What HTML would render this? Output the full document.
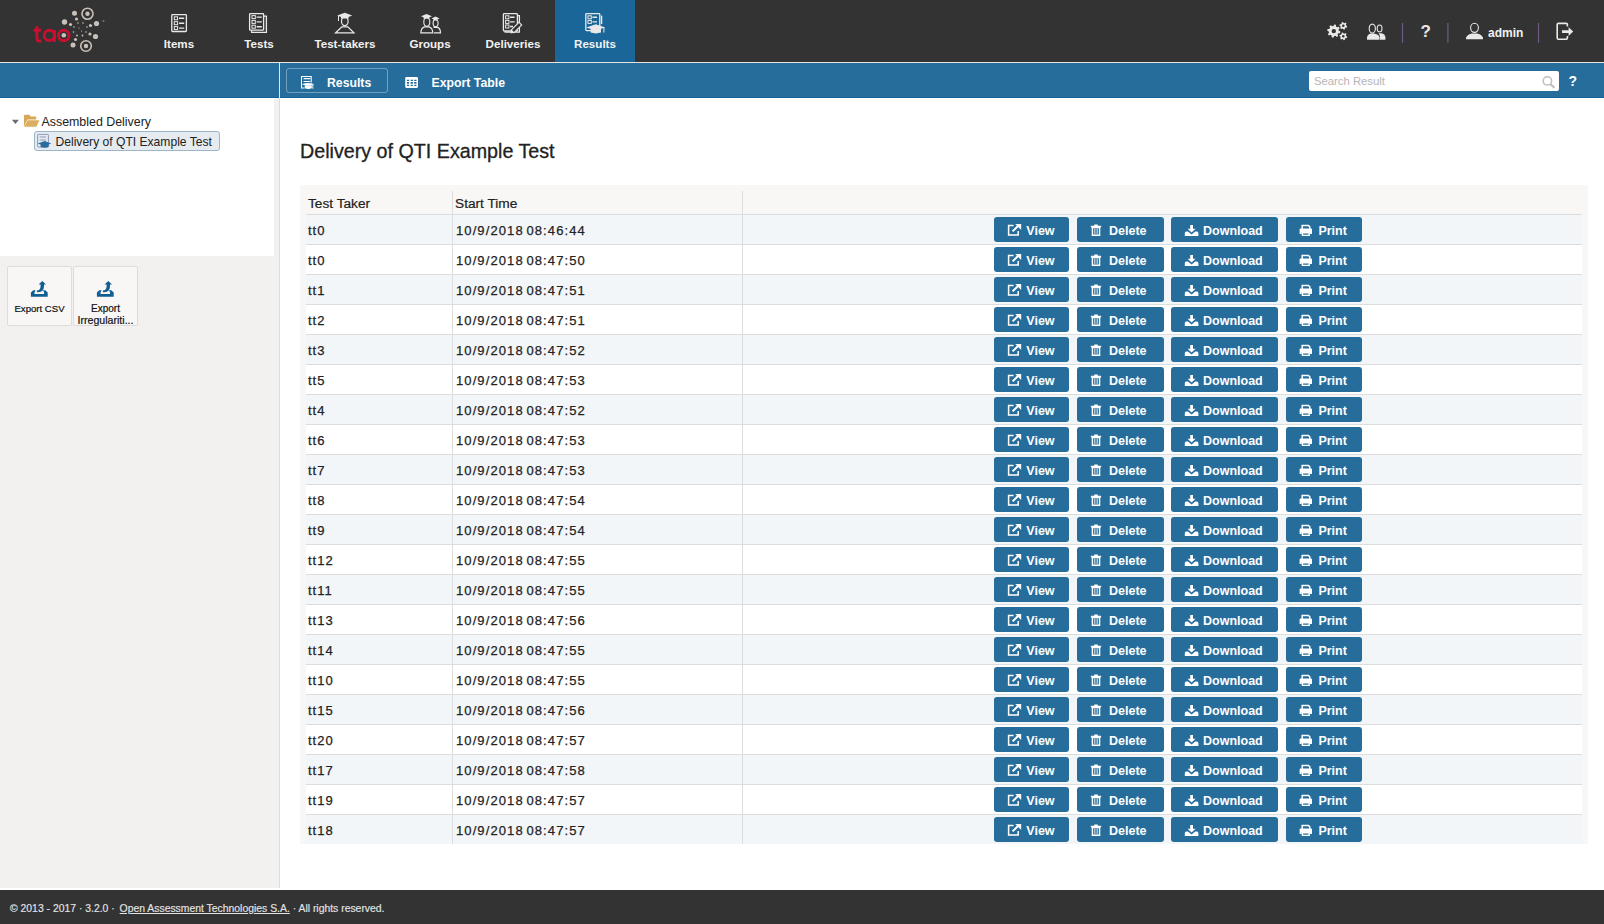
<!DOCTYPE html>
<html><head><meta charset="utf-8">
<style>
*{box-sizing:border-box;margin:0;padding:0}
html,body{width:1604px;height:924px;overflow:hidden;background:#fff;font-family:"Liberation Sans",sans-serif;color:#222}
.t{position:absolute;white-space:nowrap}
#hdr{position:absolute;left:0;top:0;width:1604px;height:62px;background:#333}
#hdrline{position:absolute;left:0;top:62px;width:1604px;height:1px;background:#e8e6e4}
#tab{position:absolute;left:555px;top:0;width:80px;height:62px;background:#1a6699}
.nav{position:absolute;top:36.5px;width:100px;text-align:center;color:#f2f2f2;font-weight:bold;font-size:11.6px;line-height:13px;white-space:nowrap}
#bar{position:absolute;left:0;top:63px;width:1604px;height:35px;background:#266d9c;border-bottom:1px solid #17629a}
#barsep{position:absolute;left:279px;top:63px;width:1px;height:35px;background:#e9e7e5}
#resbtn{position:absolute;left:286px;top:68px;width:102px;height:25px;border:1px solid rgba(255,255,255,0.35);border-radius:3px}
#left{position:absolute;left:0;top:98px;width:280px;height:790px;background:#f3f1ef;border-right:1px solid #ddd}
#tree{position:absolute;left:0;top:0;width:274px;height:158px;background:#fff}
#footer{position:absolute;left:0;top:890px;width:1604px;height:34px;background:#333}
#search{position:absolute;left:1309px;top:71px;width:250px;height:20px;background:#fff;border-radius:2px}
#tbl{position:absolute;left:300px;top:185px;width:1288px;height:659px;background:#f8f7f5}
.hrow{position:absolute;left:6px;top:0;width:1276px;height:30px;border-bottom:1px solid #ddd;font-size:13.7px;-webkit-text-stroke:0.2px #222}
.h1c{position:absolute;left:2px;top:11px;line-height:16px;white-space:nowrap}
.h2c{position:absolute;left:149px;top:11px;line-height:16px;white-space:nowrap}
.row{position:absolute;left:6px;width:1276px;height:30px;border-bottom:1px solid #ddd;font-size:14px;background:#fff}
.row.odd{background:#f3f6f8}
.row.last{border-bottom:none;height:29px}
.c1{position:absolute;left:2px;top:7.5px;line-height:16px;font-size:13px;letter-spacing:1px;white-space:nowrap;-webkit-text-stroke:0.25px #222}
.c2{position:absolute;left:150px;top:7.5px;line-height:16px;font-size:13px;letter-spacing:1.1px;word-spacing:-2px;white-space:nowrap;-webkit-text-stroke:0.25px #222}
.vs{position:absolute;top:0;width:1px;height:100%;background:#ddd}
.btn{position:absolute;top:2px;height:25px;background:#266d9c;color:#fff;border-radius:3px;font-weight:bold;font-size:12.5px;line-height:24px;white-space:nowrap}
.ic{position:absolute;top:1px;left:0;display:block}
.btn span{position:absolute;top:2px}
.exp{position:absolute;top:266px;width:65px;height:60px;background:#f8f7f6;border:1px solid #ddd;border-radius:2px;font-size:10px;color:#222;text-align:center;line-height:11px}
</style></head><body>
<div id="hdr"></div>
<div id="tab"></div>
<div id="hdrline"></div>
<div id="bar"></div>
<div id="barsep"></div>
<div id="resbtn"></div>
<div id="search"></div>
<div id="left"><div id="tree"></div></div>
<div id="footer"></div>

<svg class="t" style="left:0;top:0" width="1604" height="98" viewBox="0 0 1604 98">
 <!-- logo -->
 <g fill="none" stroke="#c8102e" stroke-width="2.9">
  <path d="M37,26 V39 Q37,41 39.5,41 H41.5"/>
  <path d="M33.5,30.2 H41"/>
  <circle cx="49.3" cy="35.4" r="5.1"/>
  <path d="M54.4,30 V42"/>
  <circle cx="63.8" cy="35.4" r="5.3"/>
 </g>
 <g fill="#c9c1b9">
  <circle cx="74.5" cy="13.2" r="2.5"/><circle cx="76.5" cy="19" r="1.6"/><circle cx="64.5" cy="22" r="2.7"/>
  <circle cx="70.5" cy="24.5" r="1.6"/><circle cx="96.5" cy="23.5" r="2.6"/><circle cx="90.5" cy="25.5" r="1.6"/>
  <circle cx="63.8" cy="35.3" r="2.3"/><circle cx="90" cy="34" r="1.6"/><circle cx="95.5" cy="36.5" r="2.6"/>
  <circle cx="75.5" cy="39.5" r="1.6"/><circle cx="73" cy="45" r="2.5"/>
  <circle cx="87.5" cy="13.8" r="2.2"/><circle cx="86" cy="46" r="2.2"/>
  <circle cx="78" cy="23" r=".8"/><circle cx="83" cy="23" r=".8"/><circle cx="74" cy="27" r=".8"/><circle cx="87" cy="27" r=".8"/>
  <circle cx="73.5" cy="32" r=".8"/><circle cx="86" cy="32" r=".8"/><circle cx="77" cy="35.5" r=".9"/><circle cx="82.5" cy="35.5" r=".9"/>
  <circle cx="79" cy="28" r=".6"/><circle cx="81.5" cy="31" r=".6"/><circle cx="103.5" cy="21" r="1" fill="#777"/>
 </g>
 <g fill="none" stroke="#c9c1b9" stroke-width="1.6">
  <circle cx="87.5" cy="13.8" r="5.5"/><circle cx="86" cy="46" r="5.3"/>
 </g>
 <!-- nav icons -->
 <g fill="none" stroke="#ebe9e7" stroke-width="1.3">
  <!-- items -->
  <rect x="171.8" y="14.6" width="14.6" height="16.9" rx="0.8"/>
  <rect x="174.3" y="16.8" width="3.3" height="3" stroke-width="1"/><rect x="174.3" y="21.7" width="3.3" height="3" stroke-width="1"/><rect x="174.3" y="26.6" width="3.3" height="3" stroke-width="1"/>
  <path d="M179,18.3H184.2 M179,23.2H184.2 M179,28.1H184.2" stroke-width="1.4"/>
  <!-- tests -->
  <rect x="249.6" y="13.6" width="14" height="16.6" rx="0.8"/>
  <path d="M251.6,30.4V32.4H266.4V16.2H264"/>
  <rect x="252" y="15.6" width="3.3" height="3" stroke-width="1"/><rect x="252" y="20.4" width="3.3" height="3" stroke-width="1"/><rect x="252" y="25.2" width="3.3" height="3" stroke-width="1"/>
  <path d="M256.6,17.1H261.8 M256.6,21.9H261.8 M256.6,26.7H261.8" stroke-width="1.4"/>
  <!-- test takers -->
  <ellipse cx="344.8" cy="21.2" rx="3.3" ry="4.4" stroke-width="1.2"/>
  <path d="M335.7,32.8 L341.8,26.9 H347.8 L353.9,32.8 Z"/>
  <path d="M338.5,16 V21" stroke-width="1"/>
  <!-- groups -->
  <ellipse cx="426.8" cy="22" rx="3" ry="4.2" stroke-width="1.1"/>
  <path d="M420.8,32.9 Q421,28 424.6,26.9 H429 Q432.6,28 432.8,32.9 Z" stroke-width="1.2"/>
  <ellipse cx="435.6" cy="23.2" rx="2.5" ry="3.4" stroke-width="1.1"/>
  <path d="M433.5,27.4 H437.6 Q440.4,28.4 440.5,32.9 H434" stroke-width="1.2"/>
  <!-- deliveries -->
  <rect x="503.4" y="13.6" width="14" height="17.4" rx="0.8"/>
  <path d="M505.2,31.2V32.2H519.4V15.6H517.6"/>
  <rect x="505.6" y="15.8" width="3.3" height="3" stroke-width="1"/><rect x="505.6" y="20.4" width="3.3" height="3" stroke-width="1"/><rect x="505.6" y="25" width="3.3" height="3" stroke-width="1"/>
  <path d="M510,17.3H514.6 M510,21.9H514.6 M510,26.5H513" stroke-width="1.4"/>
  <!-- results -->
  <rect x="585.8" y="13.6" width="14" height="17" rx="0.8"/>
  <path d="M601.6,15.6V24"/>
  <rect x="588" y="15.8" width="3.3" height="3" stroke-width="1"/><rect x="588" y="20.4" width="3.3" height="3" stroke-width="1"/>
  <path d="M592.4,17.3H597 M592.4,21.9H597" stroke-width="1.4"/>
  <!-- right: users -->
  <ellipse cx="1372.3" cy="28.6" rx="3.1" ry="4.5" stroke-width="1.1"/>
  <ellipse cx="1379.6" cy="28.4" rx="2.4" ry="3.4" stroke-width="1.1"/>
  <!-- user -->
  <ellipse cx="1474.5" cy="27.8" rx="3.9" ry="4.6" stroke-width="1.1"/>
  <!-- logout -->
  <path d="M1567.4,26.6 V24.6 Q1567.4,23.4 1566.2,23.4 H1558.4 Q1557.2,23.4 1557.2,24.6 V38 Q1557.2,39.2 1558.4,39.2 H1566.2 Q1567.4,39.2 1567.4,38 V36" stroke-width="1.6"/>
 </g>
 <g fill="#ebe9e7">
  <path d="M337.2,15.6 L344.8,12.8 L352.2,15.6 L348.6,17 V18.6 H341 V17 Z"/>
  <path d="M421,16.3 L426.5,14 L432,16.3 L429.5,17.3 V18.4 H423.5 V17.3 Z"/>
  <path d="M431.4,18.5 L435.5,16.6 L439.6,18.5 L437.6,19.3 V20.2 H433.4 V19.3 Z"/>
  
  <path d="M586.2,27.4 L595.8,24.2 L605.2,27.4 L595.8,30.6 Z"/>
  <path d="M590.6,28.8 H601 V32.6 Q595.8,34.2 590.6,32.6 Z"/>
  <path d="M603.4,27.6 h1 v4.8 h-1z"/>
  <path fill-rule="evenodd" d="M1338.79,30.79 L1340.39,31.51 L1340.04,33.24 L1338.29,33.30 L1337.55,34.41 L1337.55,34.41 L1338.16,36.05 L1336.70,37.03 L1335.42,35.83 L1334.11,36.09 L1334.11,36.09 L1333.39,37.69 L1331.66,37.34 L1331.60,35.59 L1330.49,34.85 L1330.49,34.85 L1328.85,35.46 L1327.87,34.00 L1329.07,32.72 L1328.81,31.41 L1328.81,31.41 L1327.21,30.69 L1327.56,28.96 L1329.31,28.90 L1330.05,27.79 L1330.05,27.79 L1329.44,26.15 L1330.90,25.17 L1332.18,26.37 L1333.49,26.11 L1333.49,26.11 L1334.21,24.51 L1335.94,24.86 L1336.00,26.61 L1337.11,27.35 L1337.11,27.35 L1338.75,26.74 L1339.73,28.20 L1338.53,29.48 L1338.79,30.79Z M1331.60,31.10 a2.20,2.20 0 1,0 4.40,0 a2.20,2.20 0 1,0 -4.40,0Z"/>
  <path fill-rule="evenodd" d="M1346.19,25.56 L1347.19,26.13 L1346.83,27.46 L1345.68,27.46 L1344.96,28.18 L1344.96,28.18 L1344.96,29.33 L1343.63,29.69 L1343.06,28.69 L1342.07,28.42 L1342.07,28.42 L1341.07,29.00 L1340.10,28.03 L1340.68,27.03 L1340.41,26.04 L1340.41,26.04 L1339.41,25.47 L1339.77,24.14 L1340.92,24.14 L1341.64,23.42 L1341.64,23.42 L1341.64,22.27 L1342.97,21.91 L1343.54,22.91 L1344.53,23.18 L1344.53,23.18 L1345.53,22.60 L1346.50,23.57 L1345.92,24.57 L1346.19,25.56Z M1342.00,25.80 a1.30,1.30 0 1,0 2.60,0 a1.30,1.30 0 1,0 -2.60,0Z"/>
  <path fill-rule="evenodd" d="M1346.19,36.06 L1347.19,36.63 L1346.83,37.96 L1345.68,37.96 L1344.96,38.68 L1344.96,38.68 L1344.96,39.83 L1343.63,40.19 L1343.06,39.19 L1342.07,38.92 L1342.07,38.92 L1341.07,39.50 L1340.10,38.53 L1340.68,37.53 L1340.41,36.54 L1340.41,36.54 L1339.41,35.97 L1339.77,34.64 L1340.92,34.64 L1341.64,33.92 L1341.64,33.92 L1341.64,32.77 L1342.97,32.41 L1343.54,33.41 L1344.53,33.68 L1344.53,33.68 L1345.53,33.10 L1346.50,34.07 L1345.92,35.07 L1346.19,36.06Z M1342.00,36.30 a1.30,1.30 0 1,0 2.60,0 a1.30,1.30 0 1,0 -2.60,0Z"/>
  <path d="M1367,39.7 V37.2 Q1367.8,33.9 1370.8,33.4 H1373.8 Q1378.6,33.9 1379.5,37.2 V39.7 Z"/>
  <path d="M1378.4,33.2 H1381.4 Q1385,34 1385.4,37 V39.7 H1380 V36.8 Q1379.8,34.6 1378.4,33.2 Z"/>
  <path d="M1466,39.3 V37.6 Q1468,34 1472,33.4 H1477 Q1481,34 1483,37.6 V39.3 Z"/>
  <path d="M1562,30.2 H1568.6 V27.2 L1573.2,31.6 L1568.6,36 V33 H1562 Z"/>
 </g>
 <g stroke="#6d5d86" stroke-width="1.2">
  <path d="M1402.5,23 V42.8 M1447.9,23 V42.8 M1538.5,23 V42.8"/>
 </g>
 <g transform="rotate(-45 516.4 27.6)"><rect x="511" y="25.7" width="11" height="3.8" fill="#333" stroke="#ebe9e7" stroke-width="1.1"/><path d="M511,25.7 L508,27.6 L511,29.5Z" fill="#ebe9e7"/></g>
 <!-- action bar icons -->
 <g fill="none" stroke="#fff" stroke-width="1.1">
  <path d="M311.2,82.6 V76.5 H301.5 V88 H304.6"/>
  <path d="M303.6,78.7H310.2 M303.6,81.5H310.2" stroke-width="1.2"/>
 </g>
 <g fill="#fff">
  <path d="M301.8,84.2 Q308,81.6 314.2,84.2 Q308,86.6 301.8,84.2Z"/><path d="M304.8,85.2 H311.8 V88.2 Q308.3,89.8 304.8,88.2Z"/><path d="M312.4,84.6h.9v4.2h-.9z"/>
 <path fill-rule="evenodd" d="M405.2,78.4 Q405.2,77.1 406.5,77.1 H416.7 Q418,77.1 418,78.4 V86.6 Q418,87.9 416.7,87.9 H406.5 Q405.2,87.9 405.2,86.6Z M406.9,79.7h2.2v1.4h-2.2z M410.6,79.7h2.3v1.4h-2.3z M414.2,79.7h2.3v1.4h-2.3z M406.9,82h2.2v1.8h-2.2z M410.6,82h2.3v1.8h-2.3z M414.2,82h2.3v1.8h-2.3z M406.9,84.7h2.2v1.4h-2.2z M410.6,84.7h2.3v1.4h-2.3z M414.2,84.7h2.3v1.4h-2.3z"/>
 </g>
 <g fill="none" stroke="#bdbdbd">
  <circle cx="1547.4" cy="80.9" r="4.2" stroke-width="1.5"/>
  <path d="M1550.6,84.2 L1554.4,87.8" stroke-width="2"/>
 </g>
</svg>

<div class="nav" style="left:129px">Items</div>
<div class="nav" style="left:209px">Tests</div>
<div class="nav" style="left:295px">Test-takers</div>
<div class="nav" style="left:380px">Groups</div>
<div class="nav" style="left:463px">Deliveries</div>
<div class="nav" style="left:545px">Results</div>

<div class="t" style="left:1420.5px;top:22px;font-size:17px;font-weight:bold;color:#ebe9e7;line-height:20px">?</div>
<div class="t" style="left:1488px;top:25.5px;font-size:12px;font-weight:bold;color:#f2f2f2;line-height:14px">admin</div>

<div class="t" style="left:327px;top:76px;font-size:12.25px;font-weight:bold;color:#fff;line-height:14px">Results</div>
<div class="t" style="left:431.5px;top:76px;font-size:12.3px;font-weight:bold;color:#fff;line-height:14px">Export Table</div>
<div class="t" style="left:1314px;top:74px;font-size:11.3px;color:#b5b5b5;line-height:14px">Search Result</div>
<div class="t" style="left:1568.5px;top:73px;font-size:14px;font-weight:bold;color:#fff;line-height:16px">?</div>

<!-- tree -->
<svg class="t" style="left:0;top:98px" width="280" height="160" viewBox="0 98 280 160">
 <path d="M11.9,119.8 H18.9 L15.4,124 Z" fill="#6b6b78"/>
 <path d="M24,115.5 Q24,114.8 24.8,114.8 H29.2 L30.6,116.6 H35.4 Q36.2,116.6 36.2,117.4 V119.6 H27.4 L24,126.8 Z" fill="#d7a757"/>
 <path d="M24.4,126.8 L27.6,120.2 H39.4 L36.4,126.8 Z" fill="#dcae5f"/>
 <rect x="34.5" y="131.5" width="185" height="19" rx="2.5" fill="#e6ebef" stroke="#9cb5c8" stroke-width="1"/>
 <g fill="none" stroke="#8f9ac2" stroke-width="1">
  <rect x="37.6" y="134.4" width="10.8" height="12.6" rx="0.6"/>
  <path d="M39.6,137H46 M39.6,140H46"/>
 </g>
 <g fill="#2b6c9e">
  <path d="M37.8,143.6 L44.6,141 L51.2,143.6 L44.6,146.2Z"/><path d="M40.6,144.4 H48.6 V147 Q44.6,148.6 40.6,147Z"/>
 </g>
</svg>
<div class="t" style="left:41.5px;top:115px;font-size:12.4px;color:#222;line-height:14px">Assembled Delivery</div>
<div class="t" style="left:55.5px;top:135px;font-size:12.1px;color:#222;line-height:14px">Delivery of QTI Example Test</div>

<!-- export buttons -->
<div class="exp" style="left:7px"></div>
<div class="exp" style="left:73px"></div>
<svg class="t" style="left:0;top:260px" width="150" height="50" viewBox="0 260 150 50">
 <g id="expic" fill="#0f5f93" transform="translate(-0.3 0)">
  <path d="M31.2,296.8 V292.6 L33.6,290.2 H35.9 L34.8,292.4 V294 H44.4 V292.4 L43.3,290.2 H45.6 L48,292.6 V296.8 Z"/>
  <path d="M37.2,290.6 Q40.9,290.4 40.9,286 V284.6 H38.9 L42.6,280.9 L46.3,284.6 H44.3 V286.2 Q44.2,292 38.4,292.2 H37.2Z"/>
 </g>
 <use href="#expic" x="66"/>
</svg>
<div class="t" style="left:7px;top:303px;width:65px;text-align:center;font-size:9.6px;line-height:11px;color:#111;-webkit-text-stroke:0.2px #111">Export CSV</div>
<div class="t" style="left:73px;top:303px;width:65px;text-align:center;font-size:10px;line-height:11px;color:#111;-webkit-text-stroke:0.2px #111">Export</div>
<div class="t" style="left:73px;top:315px;width:65px;text-align:center;font-size:10.6px;line-height:11px;color:#111;-webkit-text-stroke:0.2px #111">Irregulariti...</div>

<div class="t" style="left:300px;top:139px;font-size:19.7px;color:#222;line-height:24px;-webkit-text-stroke:0.3px #222">Delivery of QTI Example Test</div>

<div id="tbl"><div class="hrow"><span class="h1c">Test Taker</span><span class="h2c">Start Time</span><div class="vs" style="left:146px;top:6px;height:23px"></div><div class="vs" style="left:436px;top:6px;height:23px"></div></div><div class="row odd" style="top:30px"><span class="c1">tt0</span><div class="vs" style="left:146px"></div><span class="c2">10/9/2018 08:46:44</span><div class="vs" style="left:436px"></div><div class="btn" style="left:688px;width:75px"><svg class="ic" width="75" height="24" viewBox="0 0 75 24"><path d="M19.6,7.4 H14.6 V17.1 H24.2 V13" fill="none" stroke="#fff" stroke-width="1.5"/><path d="M18.6,13.4 L24,8" stroke="#fff" stroke-width="2"/><path d="M21.2,6 H27.2 V12 Z" fill="#fff"/></svg><span style="left:32.3px">View</span></div><div class="btn" style="left:771px;width:87px"><svg class="ic" width="87" height="24" viewBox="0 0 87 24"><path d="M13.9,7.8 H24.1 V9.4 H13.9Z M17.2,6.4 H20.8 V8 H17.2Z" fill="#fff"/><path d="M15.4,9.6 H22.6 V17.2 H15.4Z" fill="none" stroke="#fff" stroke-width="1.4"/><path d="M17.5,10.5 V16.4 M19,10.5 V16.4 M20.5,10.5 V16.4" stroke="#cfdce6" stroke-width="0.8"/></svg><span style="left:32px">Delete</span></div><div class="btn" style="left:865px;width:107px"><svg class="ic" width="107" height="24" viewBox="0 0 107 24"><path d="M19.2,7 H22 V10.8 H24.6 L20.6,14.6 L16.6,10.8 H19.2Z" fill="#fff"/><path d="M13.8,15 Q14,13.6 15.6,13.6 H17 L20.6,16.6 L24.2,13.6 H25.6 Q27.2,13.6 27.4,15 V18 H13.8Z" fill="#fff"/></svg><span style="left:32px">Download</span></div><div class="btn" style="left:980px;width:76px"><svg class="ic" width="76" height="24" viewBox="0 0 76 24"><path d="M16.2,11 V7.4 H22.4 L23.8,8.8 V11" fill="none" stroke="#fff" stroke-width="1.5"/><path d="M13.6,11.6 Q13.6,10.6 14.6,10.6 H25 Q26,10.6 26,11.6 V16 H24 V14.4 H15.6 V16 H13.6Z" fill="#fff"/><path d="M16.4,14.8 H23.2 V17.4 H16.4Z" fill="none" stroke="#fff" stroke-width="1.4"/></svg><span style="left:32.4px">Print</span></div></div><div class="row" style="top:60px"><span class="c1">tt0</span><div class="vs" style="left:146px"></div><span class="c2">10/9/2018 08:47:50</span><div class="vs" style="left:436px"></div><div class="btn" style="left:688px;width:75px"><svg class="ic" width="75" height="24" viewBox="0 0 75 24"><path d="M19.6,7.4 H14.6 V17.1 H24.2 V13" fill="none" stroke="#fff" stroke-width="1.5"/><path d="M18.6,13.4 L24,8" stroke="#fff" stroke-width="2"/><path d="M21.2,6 H27.2 V12 Z" fill="#fff"/></svg><span style="left:32.3px">View</span></div><div class="btn" style="left:771px;width:87px"><svg class="ic" width="87" height="24" viewBox="0 0 87 24"><path d="M13.9,7.8 H24.1 V9.4 H13.9Z M17.2,6.4 H20.8 V8 H17.2Z" fill="#fff"/><path d="M15.4,9.6 H22.6 V17.2 H15.4Z" fill="none" stroke="#fff" stroke-width="1.4"/><path d="M17.5,10.5 V16.4 M19,10.5 V16.4 M20.5,10.5 V16.4" stroke="#cfdce6" stroke-width="0.8"/></svg><span style="left:32px">Delete</span></div><div class="btn" style="left:865px;width:107px"><svg class="ic" width="107" height="24" viewBox="0 0 107 24"><path d="M19.2,7 H22 V10.8 H24.6 L20.6,14.6 L16.6,10.8 H19.2Z" fill="#fff"/><path d="M13.8,15 Q14,13.6 15.6,13.6 H17 L20.6,16.6 L24.2,13.6 H25.6 Q27.2,13.6 27.4,15 V18 H13.8Z" fill="#fff"/></svg><span style="left:32px">Download</span></div><div class="btn" style="left:980px;width:76px"><svg class="ic" width="76" height="24" viewBox="0 0 76 24"><path d="M16.2,11 V7.4 H22.4 L23.8,8.8 V11" fill="none" stroke="#fff" stroke-width="1.5"/><path d="M13.6,11.6 Q13.6,10.6 14.6,10.6 H25 Q26,10.6 26,11.6 V16 H24 V14.4 H15.6 V16 H13.6Z" fill="#fff"/><path d="M16.4,14.8 H23.2 V17.4 H16.4Z" fill="none" stroke="#fff" stroke-width="1.4"/></svg><span style="left:32.4px">Print</span></div></div><div class="row odd" style="top:90px"><span class="c1">tt1</span><div class="vs" style="left:146px"></div><span class="c2">10/9/2018 08:47:51</span><div class="vs" style="left:436px"></div><div class="btn" style="left:688px;width:75px"><svg class="ic" width="75" height="24" viewBox="0 0 75 24"><path d="M19.6,7.4 H14.6 V17.1 H24.2 V13" fill="none" stroke="#fff" stroke-width="1.5"/><path d="M18.6,13.4 L24,8" stroke="#fff" stroke-width="2"/><path d="M21.2,6 H27.2 V12 Z" fill="#fff"/></svg><span style="left:32.3px">View</span></div><div class="btn" style="left:771px;width:87px"><svg class="ic" width="87" height="24" viewBox="0 0 87 24"><path d="M13.9,7.8 H24.1 V9.4 H13.9Z M17.2,6.4 H20.8 V8 H17.2Z" fill="#fff"/><path d="M15.4,9.6 H22.6 V17.2 H15.4Z" fill="none" stroke="#fff" stroke-width="1.4"/><path d="M17.5,10.5 V16.4 M19,10.5 V16.4 M20.5,10.5 V16.4" stroke="#cfdce6" stroke-width="0.8"/></svg><span style="left:32px">Delete</span></div><div class="btn" style="left:865px;width:107px"><svg class="ic" width="107" height="24" viewBox="0 0 107 24"><path d="M19.2,7 H22 V10.8 H24.6 L20.6,14.6 L16.6,10.8 H19.2Z" fill="#fff"/><path d="M13.8,15 Q14,13.6 15.6,13.6 H17 L20.6,16.6 L24.2,13.6 H25.6 Q27.2,13.6 27.4,15 V18 H13.8Z" fill="#fff"/></svg><span style="left:32px">Download</span></div><div class="btn" style="left:980px;width:76px"><svg class="ic" width="76" height="24" viewBox="0 0 76 24"><path d="M16.2,11 V7.4 H22.4 L23.8,8.8 V11" fill="none" stroke="#fff" stroke-width="1.5"/><path d="M13.6,11.6 Q13.6,10.6 14.6,10.6 H25 Q26,10.6 26,11.6 V16 H24 V14.4 H15.6 V16 H13.6Z" fill="#fff"/><path d="M16.4,14.8 H23.2 V17.4 H16.4Z" fill="none" stroke="#fff" stroke-width="1.4"/></svg><span style="left:32.4px">Print</span></div></div><div class="row" style="top:120px"><span class="c1">tt2</span><div class="vs" style="left:146px"></div><span class="c2">10/9/2018 08:47:51</span><div class="vs" style="left:436px"></div><div class="btn" style="left:688px;width:75px"><svg class="ic" width="75" height="24" viewBox="0 0 75 24"><path d="M19.6,7.4 H14.6 V17.1 H24.2 V13" fill="none" stroke="#fff" stroke-width="1.5"/><path d="M18.6,13.4 L24,8" stroke="#fff" stroke-width="2"/><path d="M21.2,6 H27.2 V12 Z" fill="#fff"/></svg><span style="left:32.3px">View</span></div><div class="btn" style="left:771px;width:87px"><svg class="ic" width="87" height="24" viewBox="0 0 87 24"><path d="M13.9,7.8 H24.1 V9.4 H13.9Z M17.2,6.4 H20.8 V8 H17.2Z" fill="#fff"/><path d="M15.4,9.6 H22.6 V17.2 H15.4Z" fill="none" stroke="#fff" stroke-width="1.4"/><path d="M17.5,10.5 V16.4 M19,10.5 V16.4 M20.5,10.5 V16.4" stroke="#cfdce6" stroke-width="0.8"/></svg><span style="left:32px">Delete</span></div><div class="btn" style="left:865px;width:107px"><svg class="ic" width="107" height="24" viewBox="0 0 107 24"><path d="M19.2,7 H22 V10.8 H24.6 L20.6,14.6 L16.6,10.8 H19.2Z" fill="#fff"/><path d="M13.8,15 Q14,13.6 15.6,13.6 H17 L20.6,16.6 L24.2,13.6 H25.6 Q27.2,13.6 27.4,15 V18 H13.8Z" fill="#fff"/></svg><span style="left:32px">Download</span></div><div class="btn" style="left:980px;width:76px"><svg class="ic" width="76" height="24" viewBox="0 0 76 24"><path d="M16.2,11 V7.4 H22.4 L23.8,8.8 V11" fill="none" stroke="#fff" stroke-width="1.5"/><path d="M13.6,11.6 Q13.6,10.6 14.6,10.6 H25 Q26,10.6 26,11.6 V16 H24 V14.4 H15.6 V16 H13.6Z" fill="#fff"/><path d="M16.4,14.8 H23.2 V17.4 H16.4Z" fill="none" stroke="#fff" stroke-width="1.4"/></svg><span style="left:32.4px">Print</span></div></div><div class="row odd" style="top:150px"><span class="c1">tt3</span><div class="vs" style="left:146px"></div><span class="c2">10/9/2018 08:47:52</span><div class="vs" style="left:436px"></div><div class="btn" style="left:688px;width:75px"><svg class="ic" width="75" height="24" viewBox="0 0 75 24"><path d="M19.6,7.4 H14.6 V17.1 H24.2 V13" fill="none" stroke="#fff" stroke-width="1.5"/><path d="M18.6,13.4 L24,8" stroke="#fff" stroke-width="2"/><path d="M21.2,6 H27.2 V12 Z" fill="#fff"/></svg><span style="left:32.3px">View</span></div><div class="btn" style="left:771px;width:87px"><svg class="ic" width="87" height="24" viewBox="0 0 87 24"><path d="M13.9,7.8 H24.1 V9.4 H13.9Z M17.2,6.4 H20.8 V8 H17.2Z" fill="#fff"/><path d="M15.4,9.6 H22.6 V17.2 H15.4Z" fill="none" stroke="#fff" stroke-width="1.4"/><path d="M17.5,10.5 V16.4 M19,10.5 V16.4 M20.5,10.5 V16.4" stroke="#cfdce6" stroke-width="0.8"/></svg><span style="left:32px">Delete</span></div><div class="btn" style="left:865px;width:107px"><svg class="ic" width="107" height="24" viewBox="0 0 107 24"><path d="M19.2,7 H22 V10.8 H24.6 L20.6,14.6 L16.6,10.8 H19.2Z" fill="#fff"/><path d="M13.8,15 Q14,13.6 15.6,13.6 H17 L20.6,16.6 L24.2,13.6 H25.6 Q27.2,13.6 27.4,15 V18 H13.8Z" fill="#fff"/></svg><span style="left:32px">Download</span></div><div class="btn" style="left:980px;width:76px"><svg class="ic" width="76" height="24" viewBox="0 0 76 24"><path d="M16.2,11 V7.4 H22.4 L23.8,8.8 V11" fill="none" stroke="#fff" stroke-width="1.5"/><path d="M13.6,11.6 Q13.6,10.6 14.6,10.6 H25 Q26,10.6 26,11.6 V16 H24 V14.4 H15.6 V16 H13.6Z" fill="#fff"/><path d="M16.4,14.8 H23.2 V17.4 H16.4Z" fill="none" stroke="#fff" stroke-width="1.4"/></svg><span style="left:32.4px">Print</span></div></div><div class="row" style="top:180px"><span class="c1">tt5</span><div class="vs" style="left:146px"></div><span class="c2">10/9/2018 08:47:53</span><div class="vs" style="left:436px"></div><div class="btn" style="left:688px;width:75px"><svg class="ic" width="75" height="24" viewBox="0 0 75 24"><path d="M19.6,7.4 H14.6 V17.1 H24.2 V13" fill="none" stroke="#fff" stroke-width="1.5"/><path d="M18.6,13.4 L24,8" stroke="#fff" stroke-width="2"/><path d="M21.2,6 H27.2 V12 Z" fill="#fff"/></svg><span style="left:32.3px">View</span></div><div class="btn" style="left:771px;width:87px"><svg class="ic" width="87" height="24" viewBox="0 0 87 24"><path d="M13.9,7.8 H24.1 V9.4 H13.9Z M17.2,6.4 H20.8 V8 H17.2Z" fill="#fff"/><path d="M15.4,9.6 H22.6 V17.2 H15.4Z" fill="none" stroke="#fff" stroke-width="1.4"/><path d="M17.5,10.5 V16.4 M19,10.5 V16.4 M20.5,10.5 V16.4" stroke="#cfdce6" stroke-width="0.8"/></svg><span style="left:32px">Delete</span></div><div class="btn" style="left:865px;width:107px"><svg class="ic" width="107" height="24" viewBox="0 0 107 24"><path d="M19.2,7 H22 V10.8 H24.6 L20.6,14.6 L16.6,10.8 H19.2Z" fill="#fff"/><path d="M13.8,15 Q14,13.6 15.6,13.6 H17 L20.6,16.6 L24.2,13.6 H25.6 Q27.2,13.6 27.4,15 V18 H13.8Z" fill="#fff"/></svg><span style="left:32px">Download</span></div><div class="btn" style="left:980px;width:76px"><svg class="ic" width="76" height="24" viewBox="0 0 76 24"><path d="M16.2,11 V7.4 H22.4 L23.8,8.8 V11" fill="none" stroke="#fff" stroke-width="1.5"/><path d="M13.6,11.6 Q13.6,10.6 14.6,10.6 H25 Q26,10.6 26,11.6 V16 H24 V14.4 H15.6 V16 H13.6Z" fill="#fff"/><path d="M16.4,14.8 H23.2 V17.4 H16.4Z" fill="none" stroke="#fff" stroke-width="1.4"/></svg><span style="left:32.4px">Print</span></div></div><div class="row odd" style="top:210px"><span class="c1">tt4</span><div class="vs" style="left:146px"></div><span class="c2">10/9/2018 08:47:52</span><div class="vs" style="left:436px"></div><div class="btn" style="left:688px;width:75px"><svg class="ic" width="75" height="24" viewBox="0 0 75 24"><path d="M19.6,7.4 H14.6 V17.1 H24.2 V13" fill="none" stroke="#fff" stroke-width="1.5"/><path d="M18.6,13.4 L24,8" stroke="#fff" stroke-width="2"/><path d="M21.2,6 H27.2 V12 Z" fill="#fff"/></svg><span style="left:32.3px">View</span></div><div class="btn" style="left:771px;width:87px"><svg class="ic" width="87" height="24" viewBox="0 0 87 24"><path d="M13.9,7.8 H24.1 V9.4 H13.9Z M17.2,6.4 H20.8 V8 H17.2Z" fill="#fff"/><path d="M15.4,9.6 H22.6 V17.2 H15.4Z" fill="none" stroke="#fff" stroke-width="1.4"/><path d="M17.5,10.5 V16.4 M19,10.5 V16.4 M20.5,10.5 V16.4" stroke="#cfdce6" stroke-width="0.8"/></svg><span style="left:32px">Delete</span></div><div class="btn" style="left:865px;width:107px"><svg class="ic" width="107" height="24" viewBox="0 0 107 24"><path d="M19.2,7 H22 V10.8 H24.6 L20.6,14.6 L16.6,10.8 H19.2Z" fill="#fff"/><path d="M13.8,15 Q14,13.6 15.6,13.6 H17 L20.6,16.6 L24.2,13.6 H25.6 Q27.2,13.6 27.4,15 V18 H13.8Z" fill="#fff"/></svg><span style="left:32px">Download</span></div><div class="btn" style="left:980px;width:76px"><svg class="ic" width="76" height="24" viewBox="0 0 76 24"><path d="M16.2,11 V7.4 H22.4 L23.8,8.8 V11" fill="none" stroke="#fff" stroke-width="1.5"/><path d="M13.6,11.6 Q13.6,10.6 14.6,10.6 H25 Q26,10.6 26,11.6 V16 H24 V14.4 H15.6 V16 H13.6Z" fill="#fff"/><path d="M16.4,14.8 H23.2 V17.4 H16.4Z" fill="none" stroke="#fff" stroke-width="1.4"/></svg><span style="left:32.4px">Print</span></div></div><div class="row" style="top:240px"><span class="c1">tt6</span><div class="vs" style="left:146px"></div><span class="c2">10/9/2018 08:47:53</span><div class="vs" style="left:436px"></div><div class="btn" style="left:688px;width:75px"><svg class="ic" width="75" height="24" viewBox="0 0 75 24"><path d="M19.6,7.4 H14.6 V17.1 H24.2 V13" fill="none" stroke="#fff" stroke-width="1.5"/><path d="M18.6,13.4 L24,8" stroke="#fff" stroke-width="2"/><path d="M21.2,6 H27.2 V12 Z" fill="#fff"/></svg><span style="left:32.3px">View</span></div><div class="btn" style="left:771px;width:87px"><svg class="ic" width="87" height="24" viewBox="0 0 87 24"><path d="M13.9,7.8 H24.1 V9.4 H13.9Z M17.2,6.4 H20.8 V8 H17.2Z" fill="#fff"/><path d="M15.4,9.6 H22.6 V17.2 H15.4Z" fill="none" stroke="#fff" stroke-width="1.4"/><path d="M17.5,10.5 V16.4 M19,10.5 V16.4 M20.5,10.5 V16.4" stroke="#cfdce6" stroke-width="0.8"/></svg><span style="left:32px">Delete</span></div><div class="btn" style="left:865px;width:107px"><svg class="ic" width="107" height="24" viewBox="0 0 107 24"><path d="M19.2,7 H22 V10.8 H24.6 L20.6,14.6 L16.6,10.8 H19.2Z" fill="#fff"/><path d="M13.8,15 Q14,13.6 15.6,13.6 H17 L20.6,16.6 L24.2,13.6 H25.6 Q27.2,13.6 27.4,15 V18 H13.8Z" fill="#fff"/></svg><span style="left:32px">Download</span></div><div class="btn" style="left:980px;width:76px"><svg class="ic" width="76" height="24" viewBox="0 0 76 24"><path d="M16.2,11 V7.4 H22.4 L23.8,8.8 V11" fill="none" stroke="#fff" stroke-width="1.5"/><path d="M13.6,11.6 Q13.6,10.6 14.6,10.6 H25 Q26,10.6 26,11.6 V16 H24 V14.4 H15.6 V16 H13.6Z" fill="#fff"/><path d="M16.4,14.8 H23.2 V17.4 H16.4Z" fill="none" stroke="#fff" stroke-width="1.4"/></svg><span style="left:32.4px">Print</span></div></div><div class="row odd" style="top:270px"><span class="c1">tt7</span><div class="vs" style="left:146px"></div><span class="c2">10/9/2018 08:47:53</span><div class="vs" style="left:436px"></div><div class="btn" style="left:688px;width:75px"><svg class="ic" width="75" height="24" viewBox="0 0 75 24"><path d="M19.6,7.4 H14.6 V17.1 H24.2 V13" fill="none" stroke="#fff" stroke-width="1.5"/><path d="M18.6,13.4 L24,8" stroke="#fff" stroke-width="2"/><path d="M21.2,6 H27.2 V12 Z" fill="#fff"/></svg><span style="left:32.3px">View</span></div><div class="btn" style="left:771px;width:87px"><svg class="ic" width="87" height="24" viewBox="0 0 87 24"><path d="M13.9,7.8 H24.1 V9.4 H13.9Z M17.2,6.4 H20.8 V8 H17.2Z" fill="#fff"/><path d="M15.4,9.6 H22.6 V17.2 H15.4Z" fill="none" stroke="#fff" stroke-width="1.4"/><path d="M17.5,10.5 V16.4 M19,10.5 V16.4 M20.5,10.5 V16.4" stroke="#cfdce6" stroke-width="0.8"/></svg><span style="left:32px">Delete</span></div><div class="btn" style="left:865px;width:107px"><svg class="ic" width="107" height="24" viewBox="0 0 107 24"><path d="M19.2,7 H22 V10.8 H24.6 L20.6,14.6 L16.6,10.8 H19.2Z" fill="#fff"/><path d="M13.8,15 Q14,13.6 15.6,13.6 H17 L20.6,16.6 L24.2,13.6 H25.6 Q27.2,13.6 27.4,15 V18 H13.8Z" fill="#fff"/></svg><span style="left:32px">Download</span></div><div class="btn" style="left:980px;width:76px"><svg class="ic" width="76" height="24" viewBox="0 0 76 24"><path d="M16.2,11 V7.4 H22.4 L23.8,8.8 V11" fill="none" stroke="#fff" stroke-width="1.5"/><path d="M13.6,11.6 Q13.6,10.6 14.6,10.6 H25 Q26,10.6 26,11.6 V16 H24 V14.4 H15.6 V16 H13.6Z" fill="#fff"/><path d="M16.4,14.8 H23.2 V17.4 H16.4Z" fill="none" stroke="#fff" stroke-width="1.4"/></svg><span style="left:32.4px">Print</span></div></div><div class="row" style="top:300px"><span class="c1">tt8</span><div class="vs" style="left:146px"></div><span class="c2">10/9/2018 08:47:54</span><div class="vs" style="left:436px"></div><div class="btn" style="left:688px;width:75px"><svg class="ic" width="75" height="24" viewBox="0 0 75 24"><path d="M19.6,7.4 H14.6 V17.1 H24.2 V13" fill="none" stroke="#fff" stroke-width="1.5"/><path d="M18.6,13.4 L24,8" stroke="#fff" stroke-width="2"/><path d="M21.2,6 H27.2 V12 Z" fill="#fff"/></svg><span style="left:32.3px">View</span></div><div class="btn" style="left:771px;width:87px"><svg class="ic" width="87" height="24" viewBox="0 0 87 24"><path d="M13.9,7.8 H24.1 V9.4 H13.9Z M17.2,6.4 H20.8 V8 H17.2Z" fill="#fff"/><path d="M15.4,9.6 H22.6 V17.2 H15.4Z" fill="none" stroke="#fff" stroke-width="1.4"/><path d="M17.5,10.5 V16.4 M19,10.5 V16.4 M20.5,10.5 V16.4" stroke="#cfdce6" stroke-width="0.8"/></svg><span style="left:32px">Delete</span></div><div class="btn" style="left:865px;width:107px"><svg class="ic" width="107" height="24" viewBox="0 0 107 24"><path d="M19.2,7 H22 V10.8 H24.6 L20.6,14.6 L16.6,10.8 H19.2Z" fill="#fff"/><path d="M13.8,15 Q14,13.6 15.6,13.6 H17 L20.6,16.6 L24.2,13.6 H25.6 Q27.2,13.6 27.4,15 V18 H13.8Z" fill="#fff"/></svg><span style="left:32px">Download</span></div><div class="btn" style="left:980px;width:76px"><svg class="ic" width="76" height="24" viewBox="0 0 76 24"><path d="M16.2,11 V7.4 H22.4 L23.8,8.8 V11" fill="none" stroke="#fff" stroke-width="1.5"/><path d="M13.6,11.6 Q13.6,10.6 14.6,10.6 H25 Q26,10.6 26,11.6 V16 H24 V14.4 H15.6 V16 H13.6Z" fill="#fff"/><path d="M16.4,14.8 H23.2 V17.4 H16.4Z" fill="none" stroke="#fff" stroke-width="1.4"/></svg><span style="left:32.4px">Print</span></div></div><div class="row odd" style="top:330px"><span class="c1">tt9</span><div class="vs" style="left:146px"></div><span class="c2">10/9/2018 08:47:54</span><div class="vs" style="left:436px"></div><div class="btn" style="left:688px;width:75px"><svg class="ic" width="75" height="24" viewBox="0 0 75 24"><path d="M19.6,7.4 H14.6 V17.1 H24.2 V13" fill="none" stroke="#fff" stroke-width="1.5"/><path d="M18.6,13.4 L24,8" stroke="#fff" stroke-width="2"/><path d="M21.2,6 H27.2 V12 Z" fill="#fff"/></svg><span style="left:32.3px">View</span></div><div class="btn" style="left:771px;width:87px"><svg class="ic" width="87" height="24" viewBox="0 0 87 24"><path d="M13.9,7.8 H24.1 V9.4 H13.9Z M17.2,6.4 H20.8 V8 H17.2Z" fill="#fff"/><path d="M15.4,9.6 H22.6 V17.2 H15.4Z" fill="none" stroke="#fff" stroke-width="1.4"/><path d="M17.5,10.5 V16.4 M19,10.5 V16.4 M20.5,10.5 V16.4" stroke="#cfdce6" stroke-width="0.8"/></svg><span style="left:32px">Delete</span></div><div class="btn" style="left:865px;width:107px"><svg class="ic" width="107" height="24" viewBox="0 0 107 24"><path d="M19.2,7 H22 V10.8 H24.6 L20.6,14.6 L16.6,10.8 H19.2Z" fill="#fff"/><path d="M13.8,15 Q14,13.6 15.6,13.6 H17 L20.6,16.6 L24.2,13.6 H25.6 Q27.2,13.6 27.4,15 V18 H13.8Z" fill="#fff"/></svg><span style="left:32px">Download</span></div><div class="btn" style="left:980px;width:76px"><svg class="ic" width="76" height="24" viewBox="0 0 76 24"><path d="M16.2,11 V7.4 H22.4 L23.8,8.8 V11" fill="none" stroke="#fff" stroke-width="1.5"/><path d="M13.6,11.6 Q13.6,10.6 14.6,10.6 H25 Q26,10.6 26,11.6 V16 H24 V14.4 H15.6 V16 H13.6Z" fill="#fff"/><path d="M16.4,14.8 H23.2 V17.4 H16.4Z" fill="none" stroke="#fff" stroke-width="1.4"/></svg><span style="left:32.4px">Print</span></div></div><div class="row" style="top:360px"><span class="c1">tt12</span><div class="vs" style="left:146px"></div><span class="c2">10/9/2018 08:47:55</span><div class="vs" style="left:436px"></div><div class="btn" style="left:688px;width:75px"><svg class="ic" width="75" height="24" viewBox="0 0 75 24"><path d="M19.6,7.4 H14.6 V17.1 H24.2 V13" fill="none" stroke="#fff" stroke-width="1.5"/><path d="M18.6,13.4 L24,8" stroke="#fff" stroke-width="2"/><path d="M21.2,6 H27.2 V12 Z" fill="#fff"/></svg><span style="left:32.3px">View</span></div><div class="btn" style="left:771px;width:87px"><svg class="ic" width="87" height="24" viewBox="0 0 87 24"><path d="M13.9,7.8 H24.1 V9.4 H13.9Z M17.2,6.4 H20.8 V8 H17.2Z" fill="#fff"/><path d="M15.4,9.6 H22.6 V17.2 H15.4Z" fill="none" stroke="#fff" stroke-width="1.4"/><path d="M17.5,10.5 V16.4 M19,10.5 V16.4 M20.5,10.5 V16.4" stroke="#cfdce6" stroke-width="0.8"/></svg><span style="left:32px">Delete</span></div><div class="btn" style="left:865px;width:107px"><svg class="ic" width="107" height="24" viewBox="0 0 107 24"><path d="M19.2,7 H22 V10.8 H24.6 L20.6,14.6 L16.6,10.8 H19.2Z" fill="#fff"/><path d="M13.8,15 Q14,13.6 15.6,13.6 H17 L20.6,16.6 L24.2,13.6 H25.6 Q27.2,13.6 27.4,15 V18 H13.8Z" fill="#fff"/></svg><span style="left:32px">Download</span></div><div class="btn" style="left:980px;width:76px"><svg class="ic" width="76" height="24" viewBox="0 0 76 24"><path d="M16.2,11 V7.4 H22.4 L23.8,8.8 V11" fill="none" stroke="#fff" stroke-width="1.5"/><path d="M13.6,11.6 Q13.6,10.6 14.6,10.6 H25 Q26,10.6 26,11.6 V16 H24 V14.4 H15.6 V16 H13.6Z" fill="#fff"/><path d="M16.4,14.8 H23.2 V17.4 H16.4Z" fill="none" stroke="#fff" stroke-width="1.4"/></svg><span style="left:32.4px">Print</span></div></div><div class="row odd" style="top:390px"><span class="c1">tt11</span><div class="vs" style="left:146px"></div><span class="c2">10/9/2018 08:47:55</span><div class="vs" style="left:436px"></div><div class="btn" style="left:688px;width:75px"><svg class="ic" width="75" height="24" viewBox="0 0 75 24"><path d="M19.6,7.4 H14.6 V17.1 H24.2 V13" fill="none" stroke="#fff" stroke-width="1.5"/><path d="M18.6,13.4 L24,8" stroke="#fff" stroke-width="2"/><path d="M21.2,6 H27.2 V12 Z" fill="#fff"/></svg><span style="left:32.3px">View</span></div><div class="btn" style="left:771px;width:87px"><svg class="ic" width="87" height="24" viewBox="0 0 87 24"><path d="M13.9,7.8 H24.1 V9.4 H13.9Z M17.2,6.4 H20.8 V8 H17.2Z" fill="#fff"/><path d="M15.4,9.6 H22.6 V17.2 H15.4Z" fill="none" stroke="#fff" stroke-width="1.4"/><path d="M17.5,10.5 V16.4 M19,10.5 V16.4 M20.5,10.5 V16.4" stroke="#cfdce6" stroke-width="0.8"/></svg><span style="left:32px">Delete</span></div><div class="btn" style="left:865px;width:107px"><svg class="ic" width="107" height="24" viewBox="0 0 107 24"><path d="M19.2,7 H22 V10.8 H24.6 L20.6,14.6 L16.6,10.8 H19.2Z" fill="#fff"/><path d="M13.8,15 Q14,13.6 15.6,13.6 H17 L20.6,16.6 L24.2,13.6 H25.6 Q27.2,13.6 27.4,15 V18 H13.8Z" fill="#fff"/></svg><span style="left:32px">Download</span></div><div class="btn" style="left:980px;width:76px"><svg class="ic" width="76" height="24" viewBox="0 0 76 24"><path d="M16.2,11 V7.4 H22.4 L23.8,8.8 V11" fill="none" stroke="#fff" stroke-width="1.5"/><path d="M13.6,11.6 Q13.6,10.6 14.6,10.6 H25 Q26,10.6 26,11.6 V16 H24 V14.4 H15.6 V16 H13.6Z" fill="#fff"/><path d="M16.4,14.8 H23.2 V17.4 H16.4Z" fill="none" stroke="#fff" stroke-width="1.4"/></svg><span style="left:32.4px">Print</span></div></div><div class="row" style="top:420px"><span class="c1">tt13</span><div class="vs" style="left:146px"></div><span class="c2">10/9/2018 08:47:56</span><div class="vs" style="left:436px"></div><div class="btn" style="left:688px;width:75px"><svg class="ic" width="75" height="24" viewBox="0 0 75 24"><path d="M19.6,7.4 H14.6 V17.1 H24.2 V13" fill="none" stroke="#fff" stroke-width="1.5"/><path d="M18.6,13.4 L24,8" stroke="#fff" stroke-width="2"/><path d="M21.2,6 H27.2 V12 Z" fill="#fff"/></svg><span style="left:32.3px">View</span></div><div class="btn" style="left:771px;width:87px"><svg class="ic" width="87" height="24" viewBox="0 0 87 24"><path d="M13.9,7.8 H24.1 V9.4 H13.9Z M17.2,6.4 H20.8 V8 H17.2Z" fill="#fff"/><path d="M15.4,9.6 H22.6 V17.2 H15.4Z" fill="none" stroke="#fff" stroke-width="1.4"/><path d="M17.5,10.5 V16.4 M19,10.5 V16.4 M20.5,10.5 V16.4" stroke="#cfdce6" stroke-width="0.8"/></svg><span style="left:32px">Delete</span></div><div class="btn" style="left:865px;width:107px"><svg class="ic" width="107" height="24" viewBox="0 0 107 24"><path d="M19.2,7 H22 V10.8 H24.6 L20.6,14.6 L16.6,10.8 H19.2Z" fill="#fff"/><path d="M13.8,15 Q14,13.6 15.6,13.6 H17 L20.6,16.6 L24.2,13.6 H25.6 Q27.2,13.6 27.4,15 V18 H13.8Z" fill="#fff"/></svg><span style="left:32px">Download</span></div><div class="btn" style="left:980px;width:76px"><svg class="ic" width="76" height="24" viewBox="0 0 76 24"><path d="M16.2,11 V7.4 H22.4 L23.8,8.8 V11" fill="none" stroke="#fff" stroke-width="1.5"/><path d="M13.6,11.6 Q13.6,10.6 14.6,10.6 H25 Q26,10.6 26,11.6 V16 H24 V14.4 H15.6 V16 H13.6Z" fill="#fff"/><path d="M16.4,14.8 H23.2 V17.4 H16.4Z" fill="none" stroke="#fff" stroke-width="1.4"/></svg><span style="left:32.4px">Print</span></div></div><div class="row odd" style="top:450px"><span class="c1">tt14</span><div class="vs" style="left:146px"></div><span class="c2">10/9/2018 08:47:55</span><div class="vs" style="left:436px"></div><div class="btn" style="left:688px;width:75px"><svg class="ic" width="75" height="24" viewBox="0 0 75 24"><path d="M19.6,7.4 H14.6 V17.1 H24.2 V13" fill="none" stroke="#fff" stroke-width="1.5"/><path d="M18.6,13.4 L24,8" stroke="#fff" stroke-width="2"/><path d="M21.2,6 H27.2 V12 Z" fill="#fff"/></svg><span style="left:32.3px">View</span></div><div class="btn" style="left:771px;width:87px"><svg class="ic" width="87" height="24" viewBox="0 0 87 24"><path d="M13.9,7.8 H24.1 V9.4 H13.9Z M17.2,6.4 H20.8 V8 H17.2Z" fill="#fff"/><path d="M15.4,9.6 H22.6 V17.2 H15.4Z" fill="none" stroke="#fff" stroke-width="1.4"/><path d="M17.5,10.5 V16.4 M19,10.5 V16.4 M20.5,10.5 V16.4" stroke="#cfdce6" stroke-width="0.8"/></svg><span style="left:32px">Delete</span></div><div class="btn" style="left:865px;width:107px"><svg class="ic" width="107" height="24" viewBox="0 0 107 24"><path d="M19.2,7 H22 V10.8 H24.6 L20.6,14.6 L16.6,10.8 H19.2Z" fill="#fff"/><path d="M13.8,15 Q14,13.6 15.6,13.6 H17 L20.6,16.6 L24.2,13.6 H25.6 Q27.2,13.6 27.4,15 V18 H13.8Z" fill="#fff"/></svg><span style="left:32px">Download</span></div><div class="btn" style="left:980px;width:76px"><svg class="ic" width="76" height="24" viewBox="0 0 76 24"><path d="M16.2,11 V7.4 H22.4 L23.8,8.8 V11" fill="none" stroke="#fff" stroke-width="1.5"/><path d="M13.6,11.6 Q13.6,10.6 14.6,10.6 H25 Q26,10.6 26,11.6 V16 H24 V14.4 H15.6 V16 H13.6Z" fill="#fff"/><path d="M16.4,14.8 H23.2 V17.4 H16.4Z" fill="none" stroke="#fff" stroke-width="1.4"/></svg><span style="left:32.4px">Print</span></div></div><div class="row" style="top:480px"><span class="c1">tt10</span><div class="vs" style="left:146px"></div><span class="c2">10/9/2018 08:47:55</span><div class="vs" style="left:436px"></div><div class="btn" style="left:688px;width:75px"><svg class="ic" width="75" height="24" viewBox="0 0 75 24"><path d="M19.6,7.4 H14.6 V17.1 H24.2 V13" fill="none" stroke="#fff" stroke-width="1.5"/><path d="M18.6,13.4 L24,8" stroke="#fff" stroke-width="2"/><path d="M21.2,6 H27.2 V12 Z" fill="#fff"/></svg><span style="left:32.3px">View</span></div><div class="btn" style="left:771px;width:87px"><svg class="ic" width="87" height="24" viewBox="0 0 87 24"><path d="M13.9,7.8 H24.1 V9.4 H13.9Z M17.2,6.4 H20.8 V8 H17.2Z" fill="#fff"/><path d="M15.4,9.6 H22.6 V17.2 H15.4Z" fill="none" stroke="#fff" stroke-width="1.4"/><path d="M17.5,10.5 V16.4 M19,10.5 V16.4 M20.5,10.5 V16.4" stroke="#cfdce6" stroke-width="0.8"/></svg><span style="left:32px">Delete</span></div><div class="btn" style="left:865px;width:107px"><svg class="ic" width="107" height="24" viewBox="0 0 107 24"><path d="M19.2,7 H22 V10.8 H24.6 L20.6,14.6 L16.6,10.8 H19.2Z" fill="#fff"/><path d="M13.8,15 Q14,13.6 15.6,13.6 H17 L20.6,16.6 L24.2,13.6 H25.6 Q27.2,13.6 27.4,15 V18 H13.8Z" fill="#fff"/></svg><span style="left:32px">Download</span></div><div class="btn" style="left:980px;width:76px"><svg class="ic" width="76" height="24" viewBox="0 0 76 24"><path d="M16.2,11 V7.4 H22.4 L23.8,8.8 V11" fill="none" stroke="#fff" stroke-width="1.5"/><path d="M13.6,11.6 Q13.6,10.6 14.6,10.6 H25 Q26,10.6 26,11.6 V16 H24 V14.4 H15.6 V16 H13.6Z" fill="#fff"/><path d="M16.4,14.8 H23.2 V17.4 H16.4Z" fill="none" stroke="#fff" stroke-width="1.4"/></svg><span style="left:32.4px">Print</span></div></div><div class="row odd" style="top:510px"><span class="c1">tt15</span><div class="vs" style="left:146px"></div><span class="c2">10/9/2018 08:47:56</span><div class="vs" style="left:436px"></div><div class="btn" style="left:688px;width:75px"><svg class="ic" width="75" height="24" viewBox="0 0 75 24"><path d="M19.6,7.4 H14.6 V17.1 H24.2 V13" fill="none" stroke="#fff" stroke-width="1.5"/><path d="M18.6,13.4 L24,8" stroke="#fff" stroke-width="2"/><path d="M21.2,6 H27.2 V12 Z" fill="#fff"/></svg><span style="left:32.3px">View</span></div><div class="btn" style="left:771px;width:87px"><svg class="ic" width="87" height="24" viewBox="0 0 87 24"><path d="M13.9,7.8 H24.1 V9.4 H13.9Z M17.2,6.4 H20.8 V8 H17.2Z" fill="#fff"/><path d="M15.4,9.6 H22.6 V17.2 H15.4Z" fill="none" stroke="#fff" stroke-width="1.4"/><path d="M17.5,10.5 V16.4 M19,10.5 V16.4 M20.5,10.5 V16.4" stroke="#cfdce6" stroke-width="0.8"/></svg><span style="left:32px">Delete</span></div><div class="btn" style="left:865px;width:107px"><svg class="ic" width="107" height="24" viewBox="0 0 107 24"><path d="M19.2,7 H22 V10.8 H24.6 L20.6,14.6 L16.6,10.8 H19.2Z" fill="#fff"/><path d="M13.8,15 Q14,13.6 15.6,13.6 H17 L20.6,16.6 L24.2,13.6 H25.6 Q27.2,13.6 27.4,15 V18 H13.8Z" fill="#fff"/></svg><span style="left:32px">Download</span></div><div class="btn" style="left:980px;width:76px"><svg class="ic" width="76" height="24" viewBox="0 0 76 24"><path d="M16.2,11 V7.4 H22.4 L23.8,8.8 V11" fill="none" stroke="#fff" stroke-width="1.5"/><path d="M13.6,11.6 Q13.6,10.6 14.6,10.6 H25 Q26,10.6 26,11.6 V16 H24 V14.4 H15.6 V16 H13.6Z" fill="#fff"/><path d="M16.4,14.8 H23.2 V17.4 H16.4Z" fill="none" stroke="#fff" stroke-width="1.4"/></svg><span style="left:32.4px">Print</span></div></div><div class="row" style="top:540px"><span class="c1">tt20</span><div class="vs" style="left:146px"></div><span class="c2">10/9/2018 08:47:57</span><div class="vs" style="left:436px"></div><div class="btn" style="left:688px;width:75px"><svg class="ic" width="75" height="24" viewBox="0 0 75 24"><path d="M19.6,7.4 H14.6 V17.1 H24.2 V13" fill="none" stroke="#fff" stroke-width="1.5"/><path d="M18.6,13.4 L24,8" stroke="#fff" stroke-width="2"/><path d="M21.2,6 H27.2 V12 Z" fill="#fff"/></svg><span style="left:32.3px">View</span></div><div class="btn" style="left:771px;width:87px"><svg class="ic" width="87" height="24" viewBox="0 0 87 24"><path d="M13.9,7.8 H24.1 V9.4 H13.9Z M17.2,6.4 H20.8 V8 H17.2Z" fill="#fff"/><path d="M15.4,9.6 H22.6 V17.2 H15.4Z" fill="none" stroke="#fff" stroke-width="1.4"/><path d="M17.5,10.5 V16.4 M19,10.5 V16.4 M20.5,10.5 V16.4" stroke="#cfdce6" stroke-width="0.8"/></svg><span style="left:32px">Delete</span></div><div class="btn" style="left:865px;width:107px"><svg class="ic" width="107" height="24" viewBox="0 0 107 24"><path d="M19.2,7 H22 V10.8 H24.6 L20.6,14.6 L16.6,10.8 H19.2Z" fill="#fff"/><path d="M13.8,15 Q14,13.6 15.6,13.6 H17 L20.6,16.6 L24.2,13.6 H25.6 Q27.2,13.6 27.4,15 V18 H13.8Z" fill="#fff"/></svg><span style="left:32px">Download</span></div><div class="btn" style="left:980px;width:76px"><svg class="ic" width="76" height="24" viewBox="0 0 76 24"><path d="M16.2,11 V7.4 H22.4 L23.8,8.8 V11" fill="none" stroke="#fff" stroke-width="1.5"/><path d="M13.6,11.6 Q13.6,10.6 14.6,10.6 H25 Q26,10.6 26,11.6 V16 H24 V14.4 H15.6 V16 H13.6Z" fill="#fff"/><path d="M16.4,14.8 H23.2 V17.4 H16.4Z" fill="none" stroke="#fff" stroke-width="1.4"/></svg><span style="left:32.4px">Print</span></div></div><div class="row odd" style="top:570px"><span class="c1">tt17</span><div class="vs" style="left:146px"></div><span class="c2">10/9/2018 08:47:58</span><div class="vs" style="left:436px"></div><div class="btn" style="left:688px;width:75px"><svg class="ic" width="75" height="24" viewBox="0 0 75 24"><path d="M19.6,7.4 H14.6 V17.1 H24.2 V13" fill="none" stroke="#fff" stroke-width="1.5"/><path d="M18.6,13.4 L24,8" stroke="#fff" stroke-width="2"/><path d="M21.2,6 H27.2 V12 Z" fill="#fff"/></svg><span style="left:32.3px">View</span></div><div class="btn" style="left:771px;width:87px"><svg class="ic" width="87" height="24" viewBox="0 0 87 24"><path d="M13.9,7.8 H24.1 V9.4 H13.9Z M17.2,6.4 H20.8 V8 H17.2Z" fill="#fff"/><path d="M15.4,9.6 H22.6 V17.2 H15.4Z" fill="none" stroke="#fff" stroke-width="1.4"/><path d="M17.5,10.5 V16.4 M19,10.5 V16.4 M20.5,10.5 V16.4" stroke="#cfdce6" stroke-width="0.8"/></svg><span style="left:32px">Delete</span></div><div class="btn" style="left:865px;width:107px"><svg class="ic" width="107" height="24" viewBox="0 0 107 24"><path d="M19.2,7 H22 V10.8 H24.6 L20.6,14.6 L16.6,10.8 H19.2Z" fill="#fff"/><path d="M13.8,15 Q14,13.6 15.6,13.6 H17 L20.6,16.6 L24.2,13.6 H25.6 Q27.2,13.6 27.4,15 V18 H13.8Z" fill="#fff"/></svg><span style="left:32px">Download</span></div><div class="btn" style="left:980px;width:76px"><svg class="ic" width="76" height="24" viewBox="0 0 76 24"><path d="M16.2,11 V7.4 H22.4 L23.8,8.8 V11" fill="none" stroke="#fff" stroke-width="1.5"/><path d="M13.6,11.6 Q13.6,10.6 14.6,10.6 H25 Q26,10.6 26,11.6 V16 H24 V14.4 H15.6 V16 H13.6Z" fill="#fff"/><path d="M16.4,14.8 H23.2 V17.4 H16.4Z" fill="none" stroke="#fff" stroke-width="1.4"/></svg><span style="left:32.4px">Print</span></div></div><div class="row" style="top:600px"><span class="c1">tt19</span><div class="vs" style="left:146px"></div><span class="c2">10/9/2018 08:47:57</span><div class="vs" style="left:436px"></div><div class="btn" style="left:688px;width:75px"><svg class="ic" width="75" height="24" viewBox="0 0 75 24"><path d="M19.6,7.4 H14.6 V17.1 H24.2 V13" fill="none" stroke="#fff" stroke-width="1.5"/><path d="M18.6,13.4 L24,8" stroke="#fff" stroke-width="2"/><path d="M21.2,6 H27.2 V12 Z" fill="#fff"/></svg><span style="left:32.3px">View</span></div><div class="btn" style="left:771px;width:87px"><svg class="ic" width="87" height="24" viewBox="0 0 87 24"><path d="M13.9,7.8 H24.1 V9.4 H13.9Z M17.2,6.4 H20.8 V8 H17.2Z" fill="#fff"/><path d="M15.4,9.6 H22.6 V17.2 H15.4Z" fill="none" stroke="#fff" stroke-width="1.4"/><path d="M17.5,10.5 V16.4 M19,10.5 V16.4 M20.5,10.5 V16.4" stroke="#cfdce6" stroke-width="0.8"/></svg><span style="left:32px">Delete</span></div><div class="btn" style="left:865px;width:107px"><svg class="ic" width="107" height="24" viewBox="0 0 107 24"><path d="M19.2,7 H22 V10.8 H24.6 L20.6,14.6 L16.6,10.8 H19.2Z" fill="#fff"/><path d="M13.8,15 Q14,13.6 15.6,13.6 H17 L20.6,16.6 L24.2,13.6 H25.6 Q27.2,13.6 27.4,15 V18 H13.8Z" fill="#fff"/></svg><span style="left:32px">Download</span></div><div class="btn" style="left:980px;width:76px"><svg class="ic" width="76" height="24" viewBox="0 0 76 24"><path d="M16.2,11 V7.4 H22.4 L23.8,8.8 V11" fill="none" stroke="#fff" stroke-width="1.5"/><path d="M13.6,11.6 Q13.6,10.6 14.6,10.6 H25 Q26,10.6 26,11.6 V16 H24 V14.4 H15.6 V16 H13.6Z" fill="#fff"/><path d="M16.4,14.8 H23.2 V17.4 H16.4Z" fill="none" stroke="#fff" stroke-width="1.4"/></svg><span style="left:32.4px">Print</span></div></div><div class="row odd last" style="top:630px"><span class="c1">tt18</span><div class="vs" style="left:146px"></div><span class="c2">10/9/2018 08:47:57</span><div class="vs" style="left:436px"></div><div class="btn" style="left:688px;width:75px"><svg class="ic" width="75" height="24" viewBox="0 0 75 24"><path d="M19.6,7.4 H14.6 V17.1 H24.2 V13" fill="none" stroke="#fff" stroke-width="1.5"/><path d="M18.6,13.4 L24,8" stroke="#fff" stroke-width="2"/><path d="M21.2,6 H27.2 V12 Z" fill="#fff"/></svg><span style="left:32.3px">View</span></div><div class="btn" style="left:771px;width:87px"><svg class="ic" width="87" height="24" viewBox="0 0 87 24"><path d="M13.9,7.8 H24.1 V9.4 H13.9Z M17.2,6.4 H20.8 V8 H17.2Z" fill="#fff"/><path d="M15.4,9.6 H22.6 V17.2 H15.4Z" fill="none" stroke="#fff" stroke-width="1.4"/><path d="M17.5,10.5 V16.4 M19,10.5 V16.4 M20.5,10.5 V16.4" stroke="#cfdce6" stroke-width="0.8"/></svg><span style="left:32px">Delete</span></div><div class="btn" style="left:865px;width:107px"><svg class="ic" width="107" height="24" viewBox="0 0 107 24"><path d="M19.2,7 H22 V10.8 H24.6 L20.6,14.6 L16.6,10.8 H19.2Z" fill="#fff"/><path d="M13.8,15 Q14,13.6 15.6,13.6 H17 L20.6,16.6 L24.2,13.6 H25.6 Q27.2,13.6 27.4,15 V18 H13.8Z" fill="#fff"/></svg><span style="left:32px">Download</span></div><div class="btn" style="left:980px;width:76px"><svg class="ic" width="76" height="24" viewBox="0 0 76 24"><path d="M16.2,11 V7.4 H22.4 L23.8,8.8 V11" fill="none" stroke="#fff" stroke-width="1.5"/><path d="M13.6,11.6 Q13.6,10.6 14.6,10.6 H25 Q26,10.6 26,11.6 V16 H24 V14.4 H15.6 V16 H13.6Z" fill="#fff"/><path d="M16.4,14.8 H23.2 V17.4 H16.4Z" fill="none" stroke="#fff" stroke-width="1.4"/></svg><span style="left:32.4px">Print</span></div></div></div>

<div class="t" style="left:10px;top:902px;font-size:10.4px;color:#e4e4e4;line-height:13px;-webkit-text-stroke:0.15px #e4e4e4">© 2013 - 2017 · 3.2.0 · <span style="text-decoration:underline;margin-left:2px">Open Assessment Technologies S.A.</span> · All rights reserved.</div>
</body></html>
